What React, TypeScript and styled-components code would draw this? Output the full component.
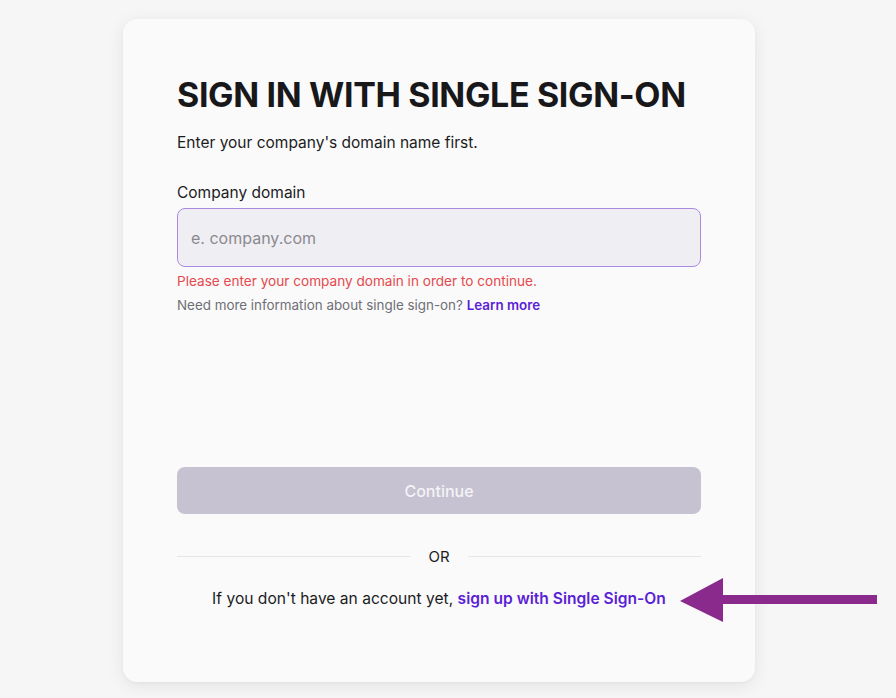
import React from "react";
import styled, { createGlobalStyle } from "styled-components";

const GlobalStyle = createGlobalStyle`
  html, body {
    margin: 0;
    padding: 0;
    background: #f6f6f7;
    font-family: Inter, "Noto Sans", sans-serif;
    color: #1c1c1e;
  }
`;

const Page = styled.div`
  position: relative;
  width: 896px;
  height: 698px;
  overflow: hidden;
  padding-top: 19px;
  box-sizing: border-box;
`;

const Card = styled.div`
  width: 632px;
  height: 663px;
  margin-left: 123px;
  box-sizing: border-box;
  padding: 56px 54px 0;
  background: #fafafa;
  border-radius: 14px;
  box-shadow: 0 4px 18px rgba(0, 0, 0, 0.08), 0 1px 3px rgba(0, 0, 0, 0.04);
  display: flex;
  flex-direction: column;
`;

const Title = styled.h1`
  margin: 0;
  font-size: 34px;
  line-height: 40px;
  font-weight: 700;
  letter-spacing: -0.35px;
  color: #18181a;
`;

const Subtitle = styled.p`
  margin: 18px 0 0;
  font-size: 15.5px;
  line-height: 20px;
  color: #1c1c1e;
`;

const Label = styled.label`
  display: block;
  margin-top: 30px;
  font-size: 15.5px;
  line-height: 20px;
  color: #1c1c1e;
`;

const Input = styled.input`
  margin-top: 5px;
  width: 100%;
  height: 59px;
  box-sizing: border-box;
  border: 1.5px solid #a98ae3;
  border-radius: 8px;
  background: #efeef2;
  padding: 0 13px;
  font-family: Inter, "Noto Sans", sans-serif;
  font-size: 16px;
  color: #1c1c1e;
  outline: none;
  caret-color: #111;

  &::placeholder {
    color: #8a8a90;
  }
`;

const Error = styled.div`
  margin-top: 5px;
  font-size: 13.6px;
  line-height: 18px;
  color: #e5484d;
`;

const Help = styled.div`
  margin-top: 6px;
  font-size: 13.4px;
  line-height: 18px;
  color: #6f6f76;
`;

const Link = styled.a`
  color: #5b1fd6;
  font-weight: 600;
  text-decoration: none;
`;

const Button = styled.button`
  margin-top: 153px;
  width: 100%;
  height: 47px;
  border: none;
  border-radius: 8px;
  background: #c6c2d1;
  color: #f4f3f7;
  font-family: Inter, "Noto Sans", sans-serif;
  font-size: 16px;
  font-weight: 500;
`;

const Divider = styled.div`
  margin-top: 33px;
  display: flex;
  align-items: center;
  gap: 18px;
  font-size: 15px;
  color: #1c1c1e;

  &::before,
  &::after {
    content: "";
    flex: 1;
    height: 1px;
    background: #e6e6e9;
  }
`;

const Footer = styled.p`
  margin: 23px 0 0;
  text-align: center;
  font-size: 15.6px;
  line-height: 20px;
  color: #1c1c1e;
`;

const Arrow = styled.svg`
  position: absolute;
  left: 678px;
  top: 576px;
`;

export default function App() {
  return (
    <Page>
      <GlobalStyle />
      <Card>
        <Title>SIGN IN WITH SINGLE SIGN-ON</Title>
        <Subtitle>Enter your company's domain name first.</Subtitle>
        <Label htmlFor="domain">Company domain</Label>
        <Input id="domain" placeholder="e. company.com" autoFocus />
        <Error>Please enter your company domain in order to continue.</Error>
        <Help>
          Need more information about single sign-on?{" "}
          <Link href="#">Learn more</Link>
        </Help>
        <Button disabled>Continue</Button>
        <Divider>OR</Divider>
        <Footer>
          If you don't have an account yet,{" "}
          <Link href="#">sign up with Single Sign-On</Link>
        </Footer>
      </Card>
      <Arrow width="202" height="50" viewBox="0 0 202 50">
        <polygon points="2,25 45,2 45,19 199,19 199,28 45,28 45,46" fill="#8a2a8c" />
      </Arrow>
    </Page>
  );
}
